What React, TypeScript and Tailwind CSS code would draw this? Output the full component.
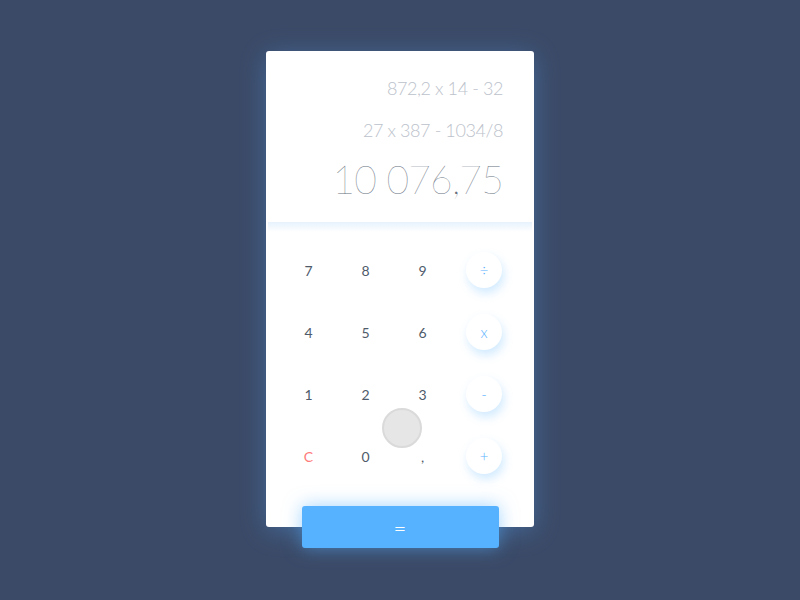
import React from 'react';

type Key = { label: string; kind: 'num' | 'op' | 'clear' };

const rows: Key[][] = [
  [{ label: '7', kind: 'num' }, { label: '8', kind: 'num' }, { label: '9', kind: 'num' }, { label: '÷', kind: 'op' }],
  [{ label: '4', kind: 'num' }, { label: '5', kind: 'num' }, { label: '6', kind: 'num' }, { label: 'x', kind: 'op' }],
  [{ label: '1', kind: 'num' }, { label: '2', kind: 'num' }, { label: '3', kind: 'num' }, { label: '-', kind: 'op' }],
  [{ label: 'C', kind: 'clear' }, { label: '0', kind: 'num' }, { label: ',', kind: 'num' }, { label: '+', kind: 'op' }],
];

function KeyCell({ k }: { k: Key }) {
  if (k.kind === 'op') {
    return (
      <div className="flex h-[62px] items-center justify-center">
        <div className="flex h-9 w-9 items-center justify-center rounded-full bg-white text-[15px] font-light text-[#5ab2ff] shadow-[2px_5px_10px_rgba(90,178,255,0.28)]">
          {k.label}
        </div>
      </div>
    );
  }
  return (
    <div
      className={
        'flex h-[62px] items-center justify-center text-[14px] ' +
        (k.kind === 'clear' ? 'text-[#ff7a7a]' : 'text-[#4f5b6b]')
      }
    >
      {k.label}
    </div>
  );
}

export default function App() {
  return (
    <div
      className="flex h-[600px] w-full flex-col items-center bg-[#3b4a67] pt-[51px]"
      style={{ fontFamily: 'Lato, "Open Sans", sans-serif' }}
    >
      <div className="relative flex h-[476px] w-[268px] flex-col rounded-[3px] bg-white shadow-[0_4px_26px_rgba(90,170,255,0.32)]">
        {/* display */}
        <div className="flex h-[171px] flex-col items-end pr-[31px] pt-[25px] font-light">
          <div className="text-[18px] leading-[24px] tracking-[-0.4px] text-[#bcc2cb]">872,2 x 14 - 32</div>
          <div className="mt-[18px] text-[18px] leading-[24px] tracking-[-0.4px] text-[#bcc2cb]">27 x 387 - 1034/8</div>
          <div className="mt-[13px] text-[39px] leading-[48px] font-thin tracking-[-0.8px] text-[#66707e]">10 076,75</div>
        </div>
        <div className="mx-[2px] h-[10px] bg-gradient-to-b from-[#e6f2fd] to-white" />

        {/* keypad */}
        <div className="relative grid grid-cols-[57px_57px_57px_66px] pl-[14px] pt-[7px]">
          {rows.flat().map((k, i) => (
            <KeyCell key={i} k={k} />
          ))}
          <div className="absolute left-[116px] top-[176px] h-10 w-10 rounded-full border-2 border-[#dadada] bg-[#e6e6e6]" />
        </div>
      </div>

      <button className="relative -mt-[21px] flex h-[42px] w-[197px] items-center justify-center rounded-[3px] bg-[#56b1ff] text-[22px] font-light text-white shadow-[0_0_18px_rgba(86,177,255,0.55)]">
        =
      </button>
    </div>
  );
}
